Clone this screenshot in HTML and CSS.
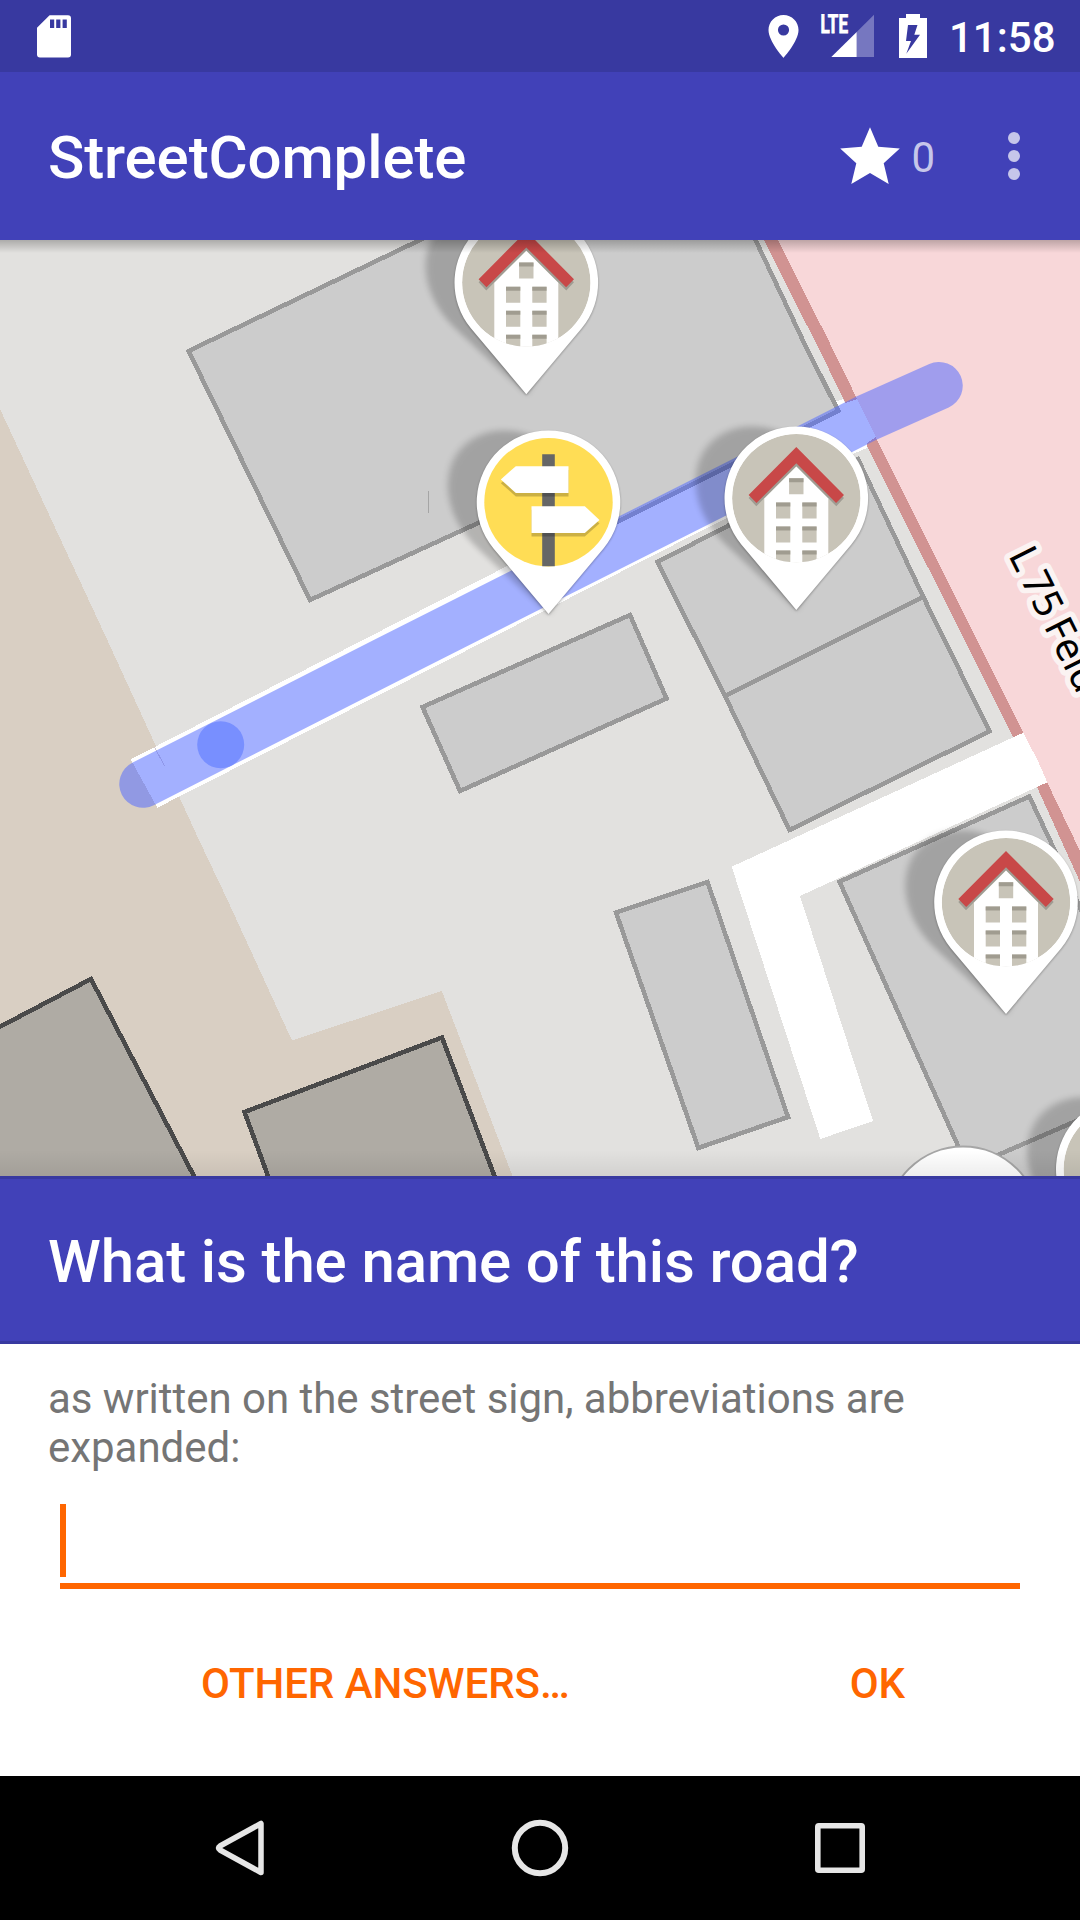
FILE: index.html
```html
<!DOCTYPE html>
<html lang="en">
<head>
<meta charset="utf-8">
<title>StreetComplete</title>
<link rel="stylesheet" href="styles.css">
</head>
<body>
<div class="screen">
  <div class="status-bar">
    <svg class="sd-icon" width="34" height="43" viewBox="37 14.5 34 43">
      <path fill="#fff" fill-rule="evenodd" d="M49.6 14.7H68q3 0 3 3V54q0 3-3 3H40q-3 0-3-3V27.3zM50 19v8.4h4.2V19zM56.2 19v8.4h4.2V19zM62.6 19v8.4h4.2V19z"/>
    </svg>
    <div class="status-icons">
      <svg width="32" height="44" viewBox="768.2 14 32 44">
        <path transform="translate(758 10.7) scale(2.143)" fill="#fff" d="M12 2C8.13 2 5 5.13 5 9c0 5.25 7 13 7 13s7-7.75 7-13c0-3.87-3.13-7-7-7zm0 9.6a2.6 2.6 0 1 1 0-5.2 2.6 2.6 0 0 1 0 5.2z"/>
      </svg>
      <svg width="55" height="44" viewBox="820 14 55 44">
        <path fill="#7677c0" d="M856.7 31.9L874 14.7V57H856.7z"/>
        <path fill="#fff" d="M831.3 57L856.7 31.9V57z"/>
        <text class="lte" x="820.5" y="33.4" textLength="27.5" lengthAdjust="spacingAndGlyphs">LTE</text>
      </svg>
      <svg width="28" height="44" viewBox="899 14 28 44">
        <path fill="#fff" fill-rule="evenodd" d="M906 14h14v4h7v40h-28V18h7zM908 25L906 41H911L906.3 53.7L920 34.7H914.3L917.5 25z"/>
      </svg>
      <span class="clock">11:58</span>
    </div>
  </div>

  <div class="app-bar">
    <h1 class="app-title">StreetComplete</h1>
    <div class="score">
      <svg width="60" height="58" viewBox="840 126 60 58">
        <path fill="#fff" d="M870 126.3L878.3 145.7L899.8 147.5L883.7 162.3L888.7 183L870 172L851.3 183L856.3 162.3L840.2 147.5L861.7 145.7z"/>
      </svg>
      <span class="score-value">0</span>
    </div>
    <svg class="overflow" width="12" height="48" viewBox="0 0 12 48">
      <g fill="#c6c6ea"><circle cx="6" cy="6" r="6"/><circle cx="6" cy="24" r="6"/><circle cx="6" cy="42" r="6"/></g>
    </svg>
  </div>

  <div class="map">
    <svg width="1080" height="936" viewBox="0 240 1080 936">
      <defs>
        <filter id="soft" x="-30%" y="-30%" width="160%" height="160%"><feGaussianBlur stdDeviation="3"/></filter>
        <filter id="rim" x="-30%" y="-30%" width="160%" height="160%"><feGaussianBlur stdDeviation="1"/></filter>
        <clipPath id="disc"><circle r="64.2"/></clipPath>
        <path id="drop" d="M0 111.8L-55 46.2A71.8 71.8 0 1 1 55 46.2z"/>
        <g id="pin">
          <use href="#drop" transform="matrix(1 0 .24 1 -26.8 0)" opacity=".2" filter="url(#soft)"/>
          <use href="#drop" y="1" opacity=".3" filter="url(#rim)"/>
          <use href="#drop" fill="#fff"/>
        </g>
        <g id="house">
          <use href="#pin"/>
          <g clip-path="url(#disc)">
            <circle r="64.2" fill="#c8c4b8"/>
            <path fill="#fff" d="M0-31.7L32 .3V66H-32V.3z"/>
            <path fill="#c8c4b8" d="M-7.2-20H7.2V-4H-7.2zM-20.3 4.3H-6V20.3H-20.3zM6 4.3H20.3V20.3H6zM-20.3 28.3H-6V44.3H-20.3zM6 28.3H20.3V44.3H6zM-20.3 52.2H-6V66H-20.3zM6 52.2H20.3V66H6z"/>
            <path fill="#a09c90" d="M-7.2-20H7.2V-16H-7.2zM-20.3 4.3H-6V8.3H-20.3zM6 4.3H20.3V8.3H6zM-20.3 28.3H-6V32.3H-20.3zM6 28.3H20.3V32.3H6zM-20.3 52.2H-6V56.2H-20.3zM6 52.2H20.3V56.2H6z"/>
            <path opacity=".2" d="M0-48.3L47.7-.3L40 8L0-32L-40 8L-47.7-.3z"/>
            <path fill="#c84848" d="M0-51.3L47.7-3.3L39.8 4.7L0-35L-39.8 4.7L-47.7-3.3z"/>
          </g>
        </g>
        <g id="signpost">
          <use href="#pin"/>
          <circle r="64.2" fill="#fd5"/>
          <path fill="#666" d="M-6.3-48H6.3V64H-6.3z"/>
          <g opacity=".2"><path d="M-47.7-19L-32.7-32.3H20V-5.8H-32.7z"/><path d="M-17 7.5H36.3L51 21.2L36.3 34.2H-17z"/></g>
          <g fill="#fff"><path d="M-47.7-22.7L-32.7-36H20V-9.3H-32.7z"/><path d="M-17 4H36.3L51 17.7L36.3 30.7H-17z"/></g>
        </g>
      </defs>

      <g shape-rendering="crispEdges">
        <rect y="240" width="1080" height="936" fill="#e2e1df"/>
        <path fill="#d9cfc3" d="M0 409L107.3 640L199 840L227.5 900L292 1040.5L441.8 991L512.5 1176H0z"/>

        <path fill="#f8d7d9" d="M770 240H1080V870L1030 760z"/>
        <path fill="#d19392" d="M764 240H778L828.3 340L876.7 439L1023.3 733L1047 782L1080 851V882L1037.3 787.7L1012.7 736.7L866.7 445L814.3 340z"/>

        <g fill="#fff">
          <path d="M1023.3 732.7L1038.3 761.7L1047.3 782.3L800 896L873 1121L820.3 1139L731.7 866.7z"/>
          <path d="M130.7 759.3L363 640L503.3 568L835 402L843 399L845 403L857 399L876 437L867 443V448L853 454L680 541.7L440 664L157.3 807.7z"/>
        </g>
        <path fill="none" stroke="#d4cbd0" d="M154.5 747L164.5 766"/>

        <g fill="#ccc" stroke="#999" stroke-width="4.5">
          <path d="M188.6 351L420 240L500 200H737L755.5 240L802.7 340L838.3 411L573 544L548 491L310 600z"/>
          <path d="M657.5 562L858 459L923.3 597L725 696z"/>
          <path d="M725 696L923.3 597L989.5 731.3L789.5 830z"/>
          <path d="M422.5 707L630 615L666.5 698.5L460 791z"/>
          <path d="M616 912.5L707.5 882L788 1117L698.3 1148z"/>
          <path d="M839.5 881.7L1029.3 796.5L1053 846.7L1090 930V1115L968 1168z"/>
          <path d="M968 1168L1090 1115V1200H985z"/>
        </g>
        <path fill="#a5a5a5" d="M428 491H429V513H428z"/>
        <g fill="#afaba4" stroke="#4a4a4a" stroke-width="4.5">
          <path d="M-10 1032L91 979L196 1180L-10 1190z"/>
          <path d="M269.5 1180L244.5 1112L442 1037.5L496 1180z"/>
        </g>
      </g>

      <path fill="none" stroke="#516aff" stroke-opacity=".53" stroke-width="47.5" stroke-linecap="round" stroke-linejoin="round" d="M143 784L385 661L866.7 418L939 385.7"/>
      <circle cx="220.7" cy="744.7" r="23.5" fill="#788fff"/>

      <text class="road-label" transform="translate(1008 555) rotate(63.5)">L 75 Feld</text>

      <use href="#house" x="526.3" y="282.5"/>
      <use href="#signpost" x="548.5" y="502.2"/>
      <use href="#house" x="796.3" y="498.2"/>
      <use href="#house" x="1006" y="902.2"/>
      <use href="#house" x="1127.8" y="1169"/>
      <circle cx="963" cy="1223" r="76.5" fill="#fff" stroke="#a6a6a6" stroke-width="2"/>
    </svg>
  </div>

  <div class="question">
    <h2 class="question-title">What is the name of this road?</h2>
  </div>

  <div class="answer">
    <p class="hint">as written on the street sign, abbreviations are expanded:</p>
    <div class="field"><span class="caret"></span></div>
    <div class="actions">
      <span class="action action-other">OTHER ANSWERS…</span>
      <span class="action action-ok">OK</span>
    </div>
  </div>

  <div class="nav-bar">
    <svg width="60" height="60" viewBox="210 1818 60 60"><path fill="none" stroke="#e6e6e6" stroke-width="5.5" stroke-linejoin="round" d="M261 1823.5V1872.5L220 1850Q217 1848 220 1846z"/></svg>
    <svg width="60" height="60" viewBox="0 0 60 60"><circle cx="30" cy="30" r="25.2" fill="none" stroke="#e6e6e6" stroke-width="6"/></svg>
    <svg width="60" height="60" viewBox="0 0 60 60"><rect x="7.8" y="7.8" width="44.4" height="44.4" rx="1" fill="none" stroke="#e6e6e6" stroke-width="5.6"/></svg>
  </div>
</div>
</body>
</html>
```
FILE: styles.css
```css
* {
  box-sizing: border-box;
}

body {
  margin: 0;
  font-family: Roboto, "Liberation Sans", sans-serif;
}

svg {
  display: block;
  flex: none;
}

h1, h2, p {
  margin: 0;
}

.screen {
  display: flex;
  flex-direction: column;
  width: 1080px;
  height: 1920px;
  overflow: hidden;
  background: #fff;
}

.status-bar {
  display: flex;
  align-items: center;
  justify-content: space-between;
  height: 72px;
  padding: 0 24px 0 37px;
  background: #3839a0;
}

.status-icons {
  display: flex;
  align-items: center;
}

.status-icons svg + svg {
  margin-left: 20px;
}

.status-icons svg:nth-of-type(3) {
  margin-left: 24px;
}

.lte {
  font-size: 25.2px;
  font-weight: 700;
  fill: #fff;
  stroke: #fff;
  stroke-width: 0.8px;
}

.clock {
  width: 107px;
  margin-left: 22px;
  font-size: 42px;
  font-weight: 500;
  line-height: 48px;
  padding-top: 4px;
  color: #fff;
}

.app-bar {
  display: flex;
  align-items: center;
  height: 168px;
  padding: 0 60px 0 48px;
  background: #4141b8;
}

.app-title,
.question-title {
  padding-top: 4px;
  font-size: 60px;
  font-weight: 500;
  line-height: 72px;
  letter-spacing: -0.12px;
  color: #fff;
}

.app-title {
  flex: 1;
}

.score {
  display: flex;
  align-items: center;
  gap: 11px;
  margin-right: 73px;
}

.score-value {
  font-size: 42px;
  line-height: 48px;
  padding-top: 3px;
  color: #c6c6ea;
}

.map {
  position: relative;
  height: 936px;
  overflow: hidden;
}

.map::before,
.map::after {
  content: "";
  position: absolute;
  left: 0;
  right: 0;
  z-index: 1;
}

.map::before {
  top: 0;
  height: 13px;
  background: linear-gradient(rgba(0, 0, 0, 0.24), rgba(0, 0, 0, 0));
}

.map::after {
  bottom: 0;
  height: 26px;
  background: linear-gradient(rgba(0, 0, 0, 0), rgba(0, 0, 0, 0.07));
}

.road-label {
  font-family: "Noto Sans", sans-serif;
  font-size: 39.5px;
  word-spacing: -3.5px;
  fill: #000;
  stroke: #fbf3f2;
  stroke-width: 11px;
  stroke-linejoin: round;
  paint-order: stroke;
}

.question {
  display: flex;
  align-items: center;
  height: 168px;
  padding: 0 48px;
  border-top: 3px solid #3839a0;
  border-bottom: 3px solid #3839a0;
  background: #4141b8;
}

.answer {
  display: flex;
  flex-direction: column;
  height: 432px;
  padding: 30px 48px 0;
}

.hint {
  font-size: 42px;
  line-height: 49px;
  letter-spacing: -0.03px;
  color: #757575;
}

.field {
  height: 87px;
  margin: 30px 12px 0;
  padding-top: 2px;
  border-bottom: 6px solid #f60;
}

.caret {
  display: block;
  width: 6px;
  height: 73px;
  background: #f60;
}

.actions {
  display: flex;
  margin-top: 71px;
  padding: 0 127px 0 153px;
  justify-content: space-between;
}

.action {
  font-size: 42px;
  font-weight: 500;
  line-height: 48px;
  letter-spacing: -0.05px;
  color: #f60;
}

.nav-bar {
  display: flex;
  justify-content: space-between;
  align-items: center;
  height: 144px;
  padding: 0 210px;
  background: #000;
}
```
